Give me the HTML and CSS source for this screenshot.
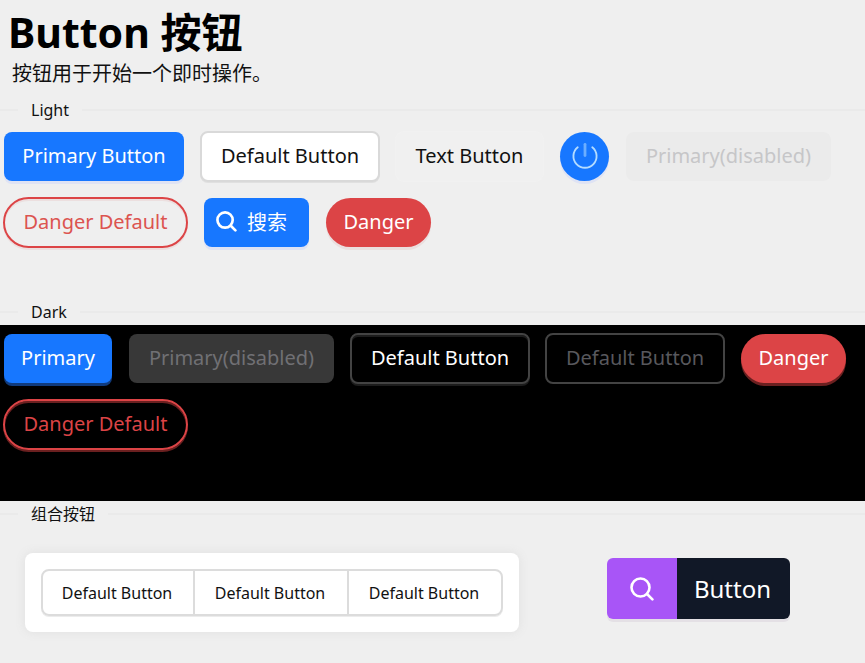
FILE: index.html
```html
<!DOCTYPE html>
<html lang="zh-CN">
<head>
<meta charset="utf-8">
<meta name="viewport" content="width=device-width, initial-scale=1">
<title>Button 按钮</title>
<link rel="stylesheet" href="styles.css">
</head>
<body>
<header class="intro">
  <h1 class="title">Button 按钮</h1>
  <p class="subtitle">按钮用于开始一个即时操作。</p>
</header>
<main>
  <section class="light">
    <h2 class="divider">Light</h2>
    <div class="buttons">
      <button class="btn primary w-lg" type="button">Primary Button</button>
      <button class="btn default w-lg" type="button">Default Button</button>
      <button class="btn text" type="button">Text Button</button>
      <button class="btn primary round" type="button" aria-label="Power">
        <svg class="power" viewBox="0 0 30 30" fill="none" stroke-linecap="round" aria-hidden="true">
          <path d="M7.2 5.6a12.4 12.4 0 1 0 15.6 0" stroke="#b4dcff" stroke-width="2"/>
          <path d="M15 2.5v12" stroke="#6caeff" stroke-width="3"/>
        </svg>
      </button>
      <button class="btn disabled w-xl" type="button" disabled>Primary(disabled)</button>
      <button class="btn danger-outline" type="button">Danger Default</button>
      <button class="btn primary w-sm with-icon" type="button">
        <svg class="search" viewBox="0 0 22 22" fill="none" stroke="currentColor" stroke-width="2.8" stroke-linecap="round" aria-hidden="true"><circle cx="9.5" cy="9.5" r="8"/><path d="M15.5 15.5l4.8 4.8"/></svg>
        搜索
      </button>
      <button class="btn danger w-sm" type="button">Danger</button>
    </div>
  </section>
  <section class="dark">
    <h2 class="divider">Dark</h2>
    <div class="buttons">
      <button class="btn primary w-sm wide" type="button">Primary</button>
      <button class="btn disabled w-xl" type="button" disabled>Primary(disabled)</button>
      <button class="btn default w-lg" type="button">Default Button</button>
      <button class="btn default w-lg" type="button" disabled>Default Button</button>
      <button class="btn danger w-sm" type="button">Danger</button>
      <button class="btn danger-outline" type="button">Danger Default</button>
    </div>
  </section>
  <section class="combined">
    <h2 class="divider">组合按钮</h2>
    <div class="groups">
      <div class="card">
        <div class="segments">
          <button class="segment" type="button">Default Button</button>
          <button class="segment" type="button">Default Button</button>
          <button class="segment" type="button">Default Button</button>
        </div>
      </div>
      <div class="split">
        <button class="split-icon" type="button" aria-label="Search">
          <svg class="search-lg" viewBox="0 0 24 24" fill="none" stroke="currentColor" stroke-width="2.6" stroke-linecap="round" aria-hidden="true"><circle cx="10.5" cy="10.5" r="9"/><path d="M17 17l5.4 5.4"/></svg>
        </button>
        <button class="split-label" type="button">Button</button>
      </div>
    </div>
  </section>
</main>
</body>
</html>
```
FILE: styles.css
```css
* { box-sizing: border-box; }

body {
  margin: 0;
  background: #efefef;
  color: #111;
  font-family: "Noto Sans", "Noto Sans CJK SC", sans-serif;
  font-size: 20px;
}

button {
  margin: 0;
  padding: 0;
  border: 0;
  font: inherit;
  color: inherit;
  white-space: nowrap;
}

svg { display: block; }

.intro { padding: 4px 8px 0; }

.title {
  margin: 0;
  color: #000;
  font-size: 41px;
  line-height: 56px;
}

.subtitle {
  margin: 0;
  padding-left: 4px;
  line-height: 28px;
}

.divider {
  display: flex;
  align-items: center;
  gap: 13px;
  margin: 0;
  font-size: 16px;
  font-weight: 400;
  line-height: 26px;
}

.divider::before,
.divider::after {
  content: "";
  height: 2px;
  background: #eaeaea;
}

.divider::before { width: 18px; }
.divider::after { flex: 1; }

.light { padding-top: 9px; }

.buttons {
  display: flex;
  flex-wrap: wrap;
  align-content: flex-start;
  gap: 15px;
  padding: 8px 3px 51px;
}

.btn {
  display: flex;
  align-items: center;
  justify-content: center;
  height: 49px;
  margin: 1px;
  padding-bottom: 2px;
  border-radius: 8px;
}

.w-sm { min-width: 105px; }
.w-lg { min-width: 180px; }
.w-xl { min-width: 205px; }
.wide { min-width: 108px; }

.primary {
  background: #1777ff;
  color: #fff;
  box-shadow: 0 3px 0 #dfe3f4;
}

.default {
  height: 51px;
  margin: 0;
  border: 2px solid #d9d9d9;
  background: #fff;
  box-shadow: 0 1px 0 #e0e0e0;
}

.text {
  min-width: 147px;
  background: #f0f0f0;
  box-shadow: 0 0 0 1px #f1f1f1;
}

.round {
  width: 49px;
  border-radius: 50%;
}

.power { width: 28px; height: 28px; }

.disabled {
  background: #ebebeb;
  color: #c6c6c8;
}

.danger {
  border-radius: 25px;
  background: #dc4446;
  color: #fff;
  box-shadow: 0 3px 0 #eadfdf;
}

.danger-outline {
  min-width: 185px;
  height: 51px;
  margin: 0;
  border: 2px solid #dc4446;
  border-radius: 26px;
  background: transparent;
  color: #dc5450;
  box-shadow: 0 2px 0 #ecdfdf, inset 0 2px 0 #ecdfdf;
}

.with-icon {
  justify-content: flex-start;
  gap: 10px;
  padding-left: 12px;
}

.search { width: 21px; height: 21px; }

.dark .buttons {
  min-height: 176px;
  background: #000;
}

.dark .primary { box-shadow: 0 3px 0 #103b7e; }
.dark .disabled { background: #383838; color: #707074; }

.dark .default {
  border-color: #434343;
  background: #000;
  color: #fff;
  box-shadow: 0 2px 0 #1c1c1c, inset 0 2px 0 #1c1c1c;
}

.dark .default:disabled {
  color: #58585d;
  box-shadow: none;
}

.dark .danger { box-shadow: 0 3px 0 #6b2020; }

.dark .danger-outline {
  color: #dc4446;
  box-shadow: 0 2px 0 #6b2020, inset 0 2px 0 #6b2020;
}

.groups {
  display: flex;
  flex-wrap: wrap;
  align-items: flex-start;
  gap: 88px;
  padding: 26px 25px;
}

.card {
  padding: 16px;
  border-radius: 8px;
  background: #fff;
  box-shadow: 0 0 10px 1px #e2e2e2;
}

.segments {
  display: flex;
  border: 2px solid #dcdcdc;
  border-radius: 8px;
  box-shadow: 0 1px 0 #ececec;
}

.segment {
  min-width: 150px;
  height: 43px;
  padding-right: 2px;
  background: transparent;
  font-size: 16px;
}

.segment + .segment {
  min-width: 154px;
  border-left: 2px solid #dcdcdc;
}

.split {
  display: flex;
  margin-top: 5px;
  border-radius: 6px;
  box-shadow: 0 3px 0 #e4e0e5;
}

.split-icon,
.split-label {
  display: flex;
  align-items: center;
  justify-content: center;
  height: 61px;
  color: #fff;
}

.split-icon {
  width: 70px;
  border-radius: 6px 0 0 6px;
  background: #a855f7;
}

.split-label {
  min-width: 113px;
  padding-right: 2px;
  border-radius: 0 6px 6px 0;
  background: #111827;
  font-size: 24px;
}

.search-lg { width: 24px; height: 24px; }
```
